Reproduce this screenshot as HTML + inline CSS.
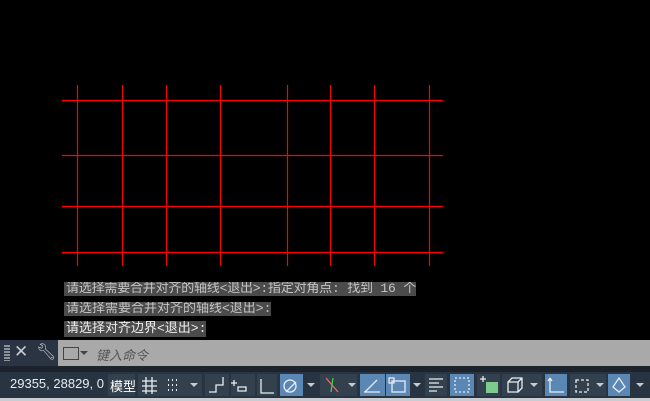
<!DOCTYPE html><html><head><meta charset="utf-8"><style>
body{margin:0;width:650px;height:401px;background:#000;position:relative;overflow:hidden;font-family:"Liberation Sans","Noto Sans CJK SC",sans-serif}
.a{position:absolute}
.t{position:absolute;left:64px;height:14px;background:#4b4b4b;color:#c4c4c4;font:13px/14px "Liberation Mono","Noto Sans CJK SC",monospace;padding:0 2px;white-space:nowrap;overflow:hidden}
.b{position:absolute;top:374px;height:22px;background:#33414f}
.bl{background:#5b87b5}
.ar{position:absolute;top:383px;width:0;height:0;border-left:4px solid transparent;border-right:4px solid transparent;border-top:4px solid #c8ccd0}
</style></head><body>
<svg class="a" style="left:0;top:0" width="650" height="280">
<g stroke="#ff0000" stroke-width="1.2">
<line x1="62" y1="100.5" x2="443" y2="100.5"/><line x1="62" y1="155.5" x2="443" y2="155.5"/><line x1="62" y1="206.5" x2="443" y2="206.5"/><line x1="62" y1="252.5" x2="443" y2="252.5"/>
<line x1="77.5" y1="85" x2="77.5" y2="266"/><line x1="122.5" y1="85" x2="122.5" y2="266"/><line x1="166.5" y1="85" x2="166.5" y2="266"/><line x1="220.5" y1="85" x2="220.5" y2="266"/><line x1="287.5" y1="85" x2="287.5" y2="266"/><line x1="330.5" y1="85" x2="330.5" y2="266"/><line x1="374.5" y1="85" x2="374.5" y2="266"/><line x1="429.5" y1="85" x2="429.5" y2="266"/>
</g></svg>
<div class="t" style="top:282px;width:348px;letter-spacing:-0.2px">请选择需要合并对齐的轴线&lt;退出&gt;:指定对角点: 找到 16 个</div>
<div class="t" style="top:302px;width:203px">请选择需要合并对齐的轴线&lt;退出&gt;:</div>
<div class="t" style="top:321px;height:16px;line-height:16px;width:138px;color:#eee">请选择对齐边界&lt;退出&gt;:</div>
<div class="a" style="left:0;top:340px;width:58px;height:26px;background:#2b3442"></div>
<div class="a" style="left:4px;top:345px;width:6px;height:16px;background:repeating-linear-gradient(#8a929c 0 2px,transparent 2px 3px)"></div>
<div class="a" style="left:14px;top:342px;color:#c8ccd0;font-size:17px">✕</div>
<div class="a" style="left:36px;top:342px;color:#c8ccd0;font-size:16px">🔧︎</div>
<div class="a" style="left:58px;top:340px;width:592px;height:26px;background:#a9a9a9"></div>
<div class="a" style="left:63px;top:347px;width:14px;height:11px;border:1px solid #444"></div>
<div class="ar" style="left:80px;top:351px;border-top-color:#444"></div>
<div class="a" style="left:96px;top:345px;color:#555;font-size:13px;font-style:italic">键入命令</div>
<div class="a" style="left:0;top:366px;width:650px;height:6px;background:#1c232c"></div>
<div class="a" style="left:0;top:372px;width:650px;height:26px;background:#283442"></div>
<div class="a" style="left:0;top:398px;width:650px;height:3px;background:#c9cdd2"></div>
<div class="a" style="left:10px;top:376px;color:#e8ecf0;font-size:13px">29355, 28829, 0</div>
<div class="b" style="left:108px;width:27px"></div><div class="a" style="left:110px;top:376px;color:#fff;font-size:13px">模型</div>
<div class="b" style="left:138px;width:64px"></div><div class="ar" style="left:190px"></div>
<div class="b" style="left:205px;width:24px"></div>
<div class="b" style="left:231px;width:24px"></div>
<div class="b" style="left:257px;width:20px"></div>
<div class="b bl" style="left:280px;width:23px"></div><div class="ar" style="left:307px"></div>
<div class="b" style="left:320px;width:37px"></div><div class="ar" style="left:348px"></div>
<div class="b bl" style="left:360px;width:25px"></div>
<div class="b bl" style="left:386px;width:24px"></div><div class="ar" style="left:413px"></div>
<div class="b" style="left:425px;width:22px"></div>
<div class="b bl" style="left:450px;width:24px"></div>
<div class="b" style="left:477px;width:23px"></div>
<div class="b" style="left:502px;width:40px"></div><div class="ar" style="left:530px"></div>
<div class="b bl" style="left:545px;width:22px"></div>
<div class="b" style="left:570px;width:36px"></div><div class="ar" style="left:596px"></div>
<div class="b bl" style="left:608px;width:22px"></div><div class="ar" style="left:636px"></div>
<svg class="a" style="left:0;top:372px" width="650" height="26" fill="none" stroke="#e8ecf0" stroke-width="1.3">
<path d="M142 9h15M142 14h15M142 19h15M146 5v17M152 5v17"/>
<path d="M168 8h1M172 8h1M176 8h1M168 13h1M172 13h1M176 13h1M168 18h1M172 18h1M176 18h1" stroke-width="2"/>
<path d="M209 20h7v-7h7v-8"/><path d="M234 8v6M231 11h6M238 15h8v4h-8z"/><path d="M261 7v14h13"/>
<circle cx="290" cy="14" r="6"/><path d="M286 20l10-10"/><path d="M326 6l12 14" stroke="#e66"/><path d="M333 6l-2 14" stroke="#4c4"/>
<path d="M364 20h16M365 20l12-12"/><rect x="392" y="9" width="13" height="11"/><rect x="389" y="6" width="5" height="5"/>
<path d="M429 7h14M429 11h10M429 15h14M429 19h8"/><rect x="455" y="6" width="14" height="14" stroke-dasharray="2 2"/>
<rect x="486" y="10" width="12" height="11" fill="#7ecb8f" stroke="none"/><path d="M480 7h6M483 4v6"/>
<path d="M508 10h10v10h-10zM508 10l4-4h10v10l-4 4M518 10l4-4"/><path d="M550 6v14h14M550 6l-2 3M550 6l2 3"/>
<rect x="576" y="8" width="12" height="12" stroke-dasharray="3 2"/><path d="M613 15l6-9 6 9-6 5z"/>
</svg>
</body></html>
